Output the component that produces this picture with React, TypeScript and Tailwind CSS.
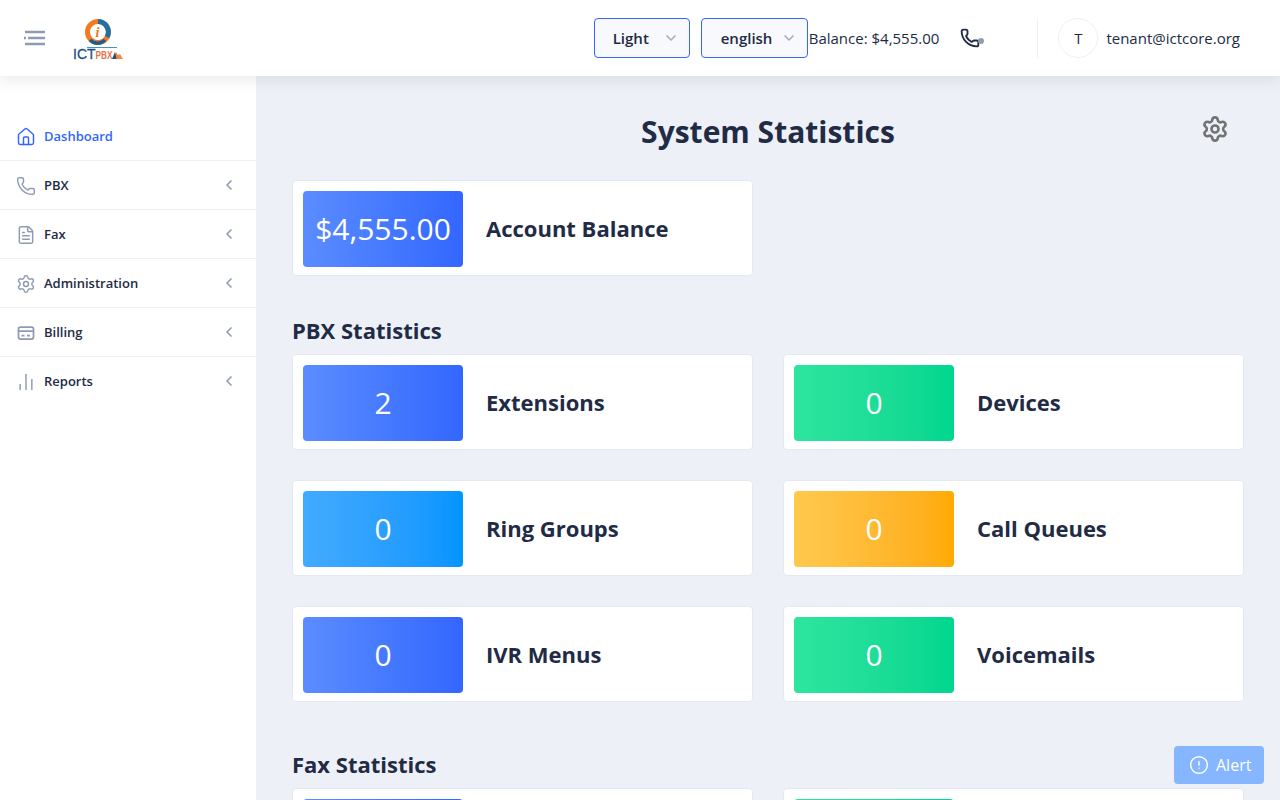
import React from "react";
import { ChevronDown, ChevronLeft, CircleAlert, FileText, House, Phone, Settings, ChartNoAxesColumn } from "lucide-react";

const BillingIcon = ({ className }: { size?: number; strokeWidth?: number; className?: string }) => (
  <svg viewBox="0 0 20 20" className={`h-[20px] w-[20px] ${className}`} fill="none" stroke="currentColor" strokeWidth="1.75">
    <rect x="2.5" y="4" width="15" height="12" rx="2" />
    <path d="M2.5 8h15M5.5 12.5h3M11 12.5h3" />
  </svg>
);

const menu = [
  { name: "PBX", icon: Phone },
  { name: "Fax", icon: FileText },
  { name: "Administration", icon: Settings },
  { name: "Billing", icon: BillingIcon },
  { name: "Reports", icon: ChartNoAxesColumn },
];

const blue = "bg-gradient-to-r from-[#5b8cff] to-[#3366ff]";
const green = "bg-gradient-to-r from-[#2de59f] to-[#00d68f]";
const sky = "bg-gradient-to-r from-[#42aaff] to-[#0095ff]";
const amber = "bg-gradient-to-r from-[#ffc94d] to-[#ffaa00]";

// logo is a drawing: ring, swoosh and wordmark
const Logo = () => (
  <svg viewBox="0 0 52 42" className="h-[42px] w-[52px]">
    <circle cx="25" cy="13" r="10.5" fill="none" stroke="#f47a20" strokeWidth="5" />
    <path d="M25 2.5a10.5 10.5 0 0 1 9 15.5" fill="none" stroke="#1f6fa8" strokeWidth="5" />
    <path d="M17 21a10.5 10.5 0 0 0 15 0" fill="none" stroke="#1b5f92" strokeWidth="3.5" />
    <circle cx="25" cy="13" r="7.5" fill="#fff" />
    <text x="22.5" y="18" fontFamily="Liberation Serif" fontSize="14" fontWeight="700" fontStyle="italic" fill="#e8762a">i</text>
    <text x="0" y="40" fontFamily="Liberation Sans" fontSize="14" fill="#1d4f86" stroke="#1d4f86" strokeWidth="0.3">ICT</text>
    <path d="M14 28.5h30" stroke="#4a90c0" strokeWidth="1" />
    <text x="22.5" y="40" fontFamily="Liberation Sans" fontSize="10" fontWeight="700" fill="#e9734a" textLength="17" lengthAdjust="spacingAndGlyphs">PBX</text>
    <path d="M40 40l3-7 2 3 2-1 3 5z" fill="#f08a3c" />
    <path d="M39 40l3-7 1.5 7z" fill="#1d4f86" />
  </svg>
);

const Dropdown = ({ label, className }: { label: string; className: string }) => (
  <div className={`flex h-[40px] items-center justify-between rounded border border-[#3366ff] bg-[#f7f9fc] pr-[10px] text-[15px] font-semibold text-[#222b45] ${className}`}>
    <span>{label}</span>
    <ChevronDown size={16} strokeWidth={2.5} className="text-[#a3aec2]" />
  </div>
);

const StatCard = ({ value, label, color }: { value?: string; label?: string; color: string }) => (
  <div className="flex h-[96px] items-center rounded border border-[#e4e9f2] bg-white p-[10px]">
    <div className={`flex h-[76px] w-[160px] shrink-0 items-center justify-center self-start rounded pb-[2px] text-[30px] text-white ${color}`}>
      {value}
    </div>
    <div className="pl-[23px] text-[22px] font-bold text-[#222b45]">{label}</div>
  </div>
);

export default function App() {
  return (
    <div className="relative flex h-screen w-full flex-col overflow-hidden bg-[#edf1f7] font-['Open_Sans',sans-serif] text-[#222b45]">
      <header className="z-10 flex h-[76px] shrink-0 items-center bg-white pl-[24px] pr-[40px] shadow-[0_4px_14px_rgba(44,51,73,0.1)]">
        <svg viewBox="0 0 21 16" className="h-[16px] w-[21px] text-[#8f9bb3]">
          <path d="M1 2h20M0 8h2M4 8h17M1 14h20" fill="none" stroke="currentColor" strokeWidth="2.4" />
        </svg>
        <div className="ml-[28px] mt-[3px]">
          <Logo />
        </div>
        <div className="ml-auto flex items-center">
          <Dropdown label="Light" className="w-[96px] pl-[18px]" />
          <Dropdown label="english" className="ml-[11px] w-[107px] pl-[19px]" />
          <span className="ml-px text-[15px]">Balance: $4,555.00</span>
          <div className="relative ml-[21px] h-[20px] w-[26px]">
            <Phone size={20} strokeWidth={2.25} className="text-[#222b45]" />
            <span className="absolute left-[18px] top-[10px] h-[6px] w-[6px] rounded-full bg-[#8f9bb3]" />
          </div>
          <div className="ml-[51px] h-[40px] border-l border-[#edf1f7]" />
          <div className="ml-[20px] flex h-[40px] w-[40px] items-center justify-center rounded-full border border-[#edf1f7] text-[15px]">
            T
          </div>
          <span className="ml-[8px] text-[15px]">tenant@ictcore.org</span>
        </div>
      </header>
      <div className="flex min-h-0 flex-1">
        <aside className="w-[256px] shrink-0 bg-white pt-[36px] text-[13px] font-semibold">
          <div className="flex h-[49px] items-center gap-[8px] border-b border-[#edf1f7] pl-[16px] pt-[2px] text-[#3366ff]">
            <House size={20} strokeWidth={1.75} />
            <span>Dashboard</span>
          </div>
          {menu.map((item) => (
            <div key={item.name} className="flex h-[49px] items-center gap-[8px] border-b border-[#edf1f7] pl-[16px] pr-[19px] pt-[2px] last:border-b-transparent">
              <item.icon size={20} strokeWidth={1.75} className="text-[#8f9bb3]" />
              <span>{item.name}</span>
              <ChevronLeft size={16} strokeWidth={2.5} className="ml-auto -mt-[2px] text-[#8f9bb3]" />
            </div>
          ))}
        </aside>
        <main className="min-w-0 flex-1 overflow-hidden px-[36px]">
          <div className="relative pt-[36px] text-center">
            <h1 className="text-[30px] font-bold leading-[40px]">System Statistics</h1>
            <Settings size={28} strokeWidth={2.25} className="absolute right-[15px] top-[39px] text-[#737373]" />
          </div>
          <div className="mt-[28px] grid grid-cols-2 gap-x-[30px]">
            <StatCard value="$4,555.00" label="Account Balance" color={blue} />
          </div>
          <h2 className="mt-[38px] text-[22px] font-bold leading-[32px]">PBX Statistics</h2>
          <div className="mt-[8px] grid grid-cols-2 gap-x-[30px] gap-y-[30px]">
            <StatCard value="2" label="Extensions" color={blue} />
            <StatCard value="0" label="Devices" color={green} />
            <StatCard value="0" label="Ring Groups" color={sky} />
            <StatCard value="0" label="Call Queues" color={amber} />
            <StatCard value="0" label="IVR Menus" color={blue} />
            <StatCard value="0" label="Voicemails" color={green} />
          </div>
          <h2 className="mt-[46px] text-[22px] font-bold leading-[32px]">Fax Statistics</h2>
          <div className="mt-[8px] grid grid-cols-2 gap-x-[30px] gap-y-[30px]">
            <StatCard color={blue} />
            <StatCard color={green} />
          </div>
        </main>
      </div>
      <div className="absolute bottom-[16px] right-[16px] flex h-[38px] w-[90px] items-center gap-[7px] rounded bg-[#85b6ff] pl-[15px] text-[16px] text-white">
        <CircleAlert size={20} strokeWidth={1.75} />
        <span>Alert</span>
      </div>
    </div>
  );
}
